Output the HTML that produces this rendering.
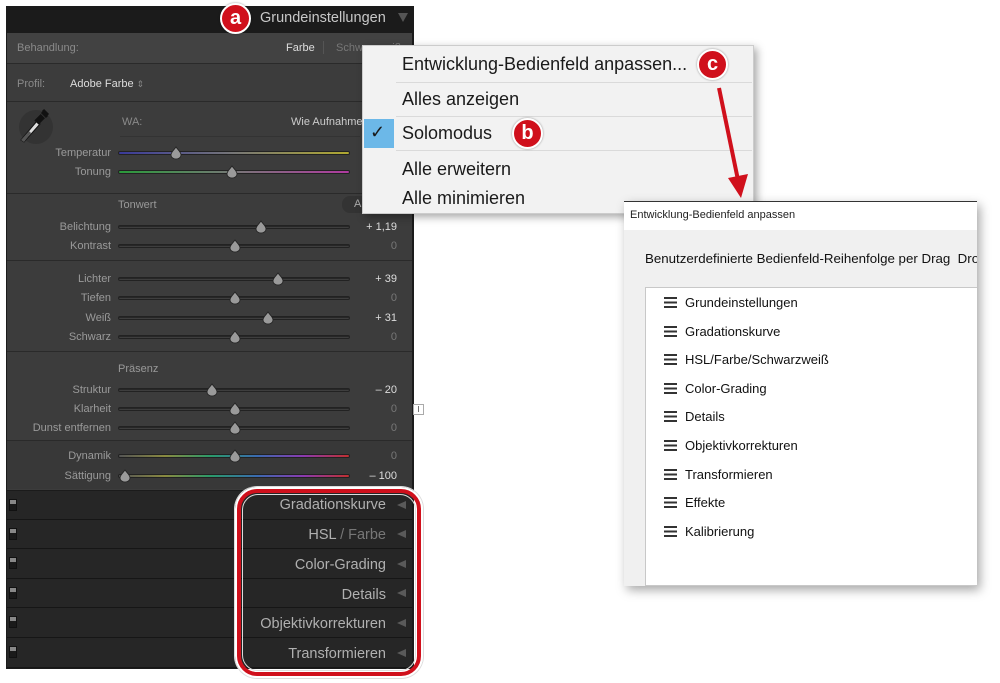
<!DOCTYPE html>
<html><head><meta charset="utf-8"><style>
*{margin:0;padding:0;box-sizing:border-box}
body{width:1000px;height:683px;background:#fff;position:relative;overflow:hidden;font-family:"Liberation Sans",sans-serif}
.a{position:absolute}
.lbl{position:absolute;right:889px;font-size:11px;color:#9a9a9a;white-space:nowrap}
.val{position:absolute;right:603px;font-size:11px;color:#777;white-space:nowrap}
.val.w{color:#ddd}
.trk{position:absolute;left:118px;width:232px;height:4px;border-radius:2px;background:linear-gradient(#1c1c1c,#4a4a4a);border:1px solid #222}
.sep{position:absolute;left:7px;width:405px;height:1px;background:#2a2a2a}
.row{position:absolute;left:7px;width:405px;height:29px;background:#262626;border-bottom:1px solid #161616}
.row .t{position:absolute;right:26px;top:6px;font-size:14.5px;color:#b0b0b0}
.row .sq{position:absolute;left:2px;top:8px;width:8px;height:12px;background:linear-gradient(#888 0 40%,#1a1a1a 40%);border:1px solid #111}
.row .tri{position:absolute;right:6px;top:10px;width:0;height:0;border-right:9px solid #5a5a5a;border-top:4px solid transparent;border-bottom:4px solid transparent}
.circ{position:absolute;width:31px;height:31px;border-radius:50%;background:#d0101c;border:2px solid #fff;color:#fff;font-weight:bold;font-size:20px;text-align:center;line-height:26px;box-shadow:0 0 2px rgba(0,0,0,.4)}
.mi{position:absolute;left:402px;font-size:18px;color:#1a1a1a;white-space:nowrap}
.ms{position:absolute;left:396px;width:356px;height:1px;background:#dadada}
.li{position:absolute;left:664px;font-size:13px;color:#111;white-space:nowrap}
.li b{display:inline-block;width:13px;height:11px;margin-right:8px;vertical-align:-1px;background:linear-gradient(#333 0 2px,transparent 2px 4.5px,#333 4.5px 6.5px,transparent 6.5px 9px,#333 9px 11px)}
</style></head><body>

<div class="a" style="left:6px;top:6px;width:408px;height:663px;background:#1b1b1b"></div>
<div class="a" style="left:7px;top:33px;width:405px;height:457px;background:#3c3c3c"></div>
<div class="a" style="left:7px;top:33px;width:405px;height:30px;background:#424242"></div>
<div class="a" style="left:7px;top:441px;width:405px;height:48px;background:#383838"></div>
<div class="a" style="left:260px;top:10px;font-size:14.5px;color:#c8c8c8">Grundeinstellungen</div>
<div class="a" style="left:398px;top:13px;width:0;height:0;border-top:9px solid #555;border-left:5px solid transparent;border-right:5px solid transparent"></div>

<div class="sep" style="top:63px"></div>
<div class="sep" style="top:101px"></div>
<div class="sep" style="top:193px"></div>
<div class="sep" style="top:260px"></div>
<div class="sep" style="top:351px"></div>
<div class="sep" style="top:440px"></div>
<div class="a" style="left:120px;top:136px;width:240px;height:1px;background:#333"></div>

<div class="a" style="left:17px;top:42px;font-size:11px;color:#8a8a8a">Behandlung:</div>
<div class="a" style="left:286px;top:42px;font-size:11px;color:#ddd">Farbe</div>
<div class="a" style="left:323px;top:41px;width:1px;height:13px;background:#555"></div>
<div class="a" style="left:336px;top:42px;font-size:11px;color:#777">Schwarzweiß</div>
<div class="a" style="left:17px;top:78px;font-size:11px;color:#8a8a8a">Profil:</div>
<div class="a" style="left:70px;top:78px;font-size:11px;color:#ddd">Adobe Farbe <span style="color:#888;font-size:9px">⇕</span></div>

<div class="a" style="left:19px;top:110px;width:34px;height:34px;border-radius:50%;background:#333"></div>
<svg class="a" style="left:17px;top:107px" width="36" height="36" viewBox="0 0 36 36"><path d="M4 33 L20 14 L23 17 L7 35 Z" fill="#ddd" stroke="#111" stroke-width="1"/><path d="M4 33 L12 24 L14 26 L7 35Z" fill="#555"/><rect x="20" y="8" width="6" height="9" transform="rotate(45 23 12)" fill="#111"/><path d="M26 3 L31 8 M25 5 L30 10" stroke="#111" stroke-width="3"/></svg>
<div class="a" style="left:122px;top:116px;font-size:11px;color:#8a8a8a">WA:</div>
<div class="a" style="left:291px;top:116px;font-size:11px;color:#ccc">Wie Aufnahme</div>
<div class="a" style="left:118px;top:199px;font-size:11px;color:#999">Tonwert</div>
<div class="a" style="left:342px;top:196px;width:30px;height:17px;border-radius:8px;background:#333;color:#aaa;font-size:11px;padding:2px 0 0 12px">A</div>
<div class="a" style="left:118px;top:363px;font-size:11px;color:#999">Präsenz</div>

<div class="lbl" style="top:147px">Temperatur</div><div class="trk" style="top:151px;background:linear-gradient(90deg,#3a3a9a,#777,#b0a830)"></div>
<div class="lbl" style="top:166px">Tonung</div><div class="trk" style="top:170px;background:linear-gradient(90deg,#2a9a3a,#777,#b03aa0)"></div>
<div class="lbl" style="top:221px">Belichtung</div><div class="trk" style="top:225px"></div><div class="val w" style="top:221px">+ 1,19</div>
<div class="lbl" style="top:240px">Kontrast</div><div class="trk" style="top:244px"></div><div class="val" style="top:240px">0</div>
<div class="lbl" style="top:273px">Lichter</div><div class="trk" style="top:277px"></div><div class="val w" style="top:273px">+ 39</div>
<div class="lbl" style="top:292px">Tiefen</div><div class="trk" style="top:296px"></div><div class="val" style="top:292px">0</div>
<div class="lbl" style="top:312px">Weiß</div><div class="trk" style="top:316px"></div><div class="val w" style="top:312px">+ 31</div>
<div class="lbl" style="top:331px">Schwarz</div><div class="trk" style="top:335px"></div><div class="val" style="top:331px">0</div>
<div class="lbl" style="top:384px">Struktur</div><div class="trk" style="top:388px"></div><div class="val w" style="top:384px">– 20</div>
<div class="lbl" style="top:403px">Klarheit</div><div class="trk" style="top:407px"></div><div class="val" style="top:403px">0</div>
<div class="lbl" style="top:422px">Dunst entfernen</div><div class="trk" style="top:426px"></div><div class="val" style="top:422px">0</div>
<div class="lbl" style="top:450px">Dynamik</div><div class="trk" style="top:454px;background:linear-gradient(90deg,#555,#8a8a40,#2a9a6a,#3a6ab0,#8a3ab0,#c03030)"></div><div class="val" style="top:450px">0</div>
<div class="lbl" style="top:470px">Sättigung</div><div class="trk" style="top:474px;background:linear-gradient(90deg,#555,#8a8a40,#2a9a6a,#3a6ab0,#8a3ab0,#c03030)"></div><div class="val w" style="top:470px">– 100</div>

<svg class="a" style="left:0;top:0" width="420" height="500">
<defs><path id="t" d="M0 -6 C2 -3 5 -1 5 2 A5 4 0 0 1 -5 2 C-5 -1 -2 -3 0 -6Z" fill="#9a9a9a" stroke="#222" stroke-width="0.8"/></defs>
<use href="#t" x="176" y="153"/><use href="#t" x="232" y="172"/>
<use href="#t" x="261" y="227"/><use href="#t" x="235" y="246"/>
<use href="#t" x="278" y="279"/><use href="#t" x="235" y="298"/>
<use href="#t" x="268" y="318"/><use href="#t" x="235" y="337"/>
<use href="#t" x="212" y="390"/><use href="#t" x="235" y="409"/>
<use href="#t" x="235" y="428"/><use href="#t" x="235" y="456"/>
<use href="#t" x="125" y="476"/>
</svg>
<div class="a" style="left:413px;top:404px;width:11px;height:11px;border:1px solid #aaa;font-size:8px;color:#444;text-align:center;line-height:9px">I</div>

<div class="row" style="top:491px"><div class="sq"></div><div class="t">Gradationskurve</div><div class="tri"></div></div>
<div class="row" style="top:520px"><div class="sq"></div><div class="t" style="top:7px">HSL <span style="color:#777">/ Farbe</span></div><div class="tri"></div></div>
<div class="row" style="top:549px;height:30px"><div class="sq"></div><div class="t" style="top:8px">Color-Grading</div><div class="tri" style="top:11px"></div></div>
<div class="row" style="top:579px"><div class="sq"></div><div class="t" style="top:8px">Details</div><div class="tri"></div></div>
<div class="row" style="top:608px;height:30px"><div class="sq"></div><div class="t" style="top:8px">Objektivkorrekturen</div><div class="tri" style="top:11px"></div></div>
<div class="row" style="top:638px;height:30px"><div class="sq"></div><div class="t" style="top:8px">Transformieren</div><div class="tri" style="top:11px"></div></div>

<div class="a" style="left:235px;top:487px;width:188px;height:191px;border:3px solid #fff;border-radius:22px;box-shadow:0 0 0 1px #ddd"></div>
<div class="a" style="left:237px;top:489px;width:184px;height:187px;border:4px solid #d0101c;border-radius:20px"></div>
<div class="a" style="left:242px;top:494px;width:174px;height:177px;border:1px solid #ddd;border-radius:16px"></div>

<div class="a" style="left:362px;top:45px;width:392px;height:169px;background:#f2f2f2;border:1px solid #ccc;box-shadow:3px 3px 8px rgba(0,0,0,.35)"></div>
<div class="mi" style="top:54px">Entwicklung-Bedienfeld anpassen...</div>
<div class="ms" style="top:82px"></div>
<div class="mi" style="top:89px">Alles anzeigen</div>
<div class="ms" style="top:116px"></div>
<div class="a" style="left:364px;top:119px;width:30px;height:29px;background:#6cb8e8"></div>
<div class="a" style="left:370px;top:122px;font-size:18px;color:#1a1a1a">✓</div>
<div class="mi" style="top:123px">Solomodus</div>
<div class="ms" style="top:150px"></div>
<div class="mi" style="top:159px">Alle erweitern</div>
<div class="mi" style="top:188px">Alle minimieren</div>

<div class="a" style="left:624px;top:201px;width:353px;height:385px;background:#f0f0f0;box-shadow:3px 4px 10px rgba(0,0,0,.35)"></div>
<div class="a" style="left:624px;top:201px;width:353px;height:29px;background:#fff;border-top:1px solid #333"></div>
<div class="a" style="left:630px;top:209px;font-size:11px;color:#222">Entwicklung-Bedienfeld anpassen</div>
<div class="a" style="left:645px;top:251px;font-size:13.3px;color:#111;white-space:nowrap;width:332px;overflow:hidden">Benutzerdefinierte Bedienfeld-Reihenfolge per Drag&nbsp; Drop</div>
<div class="a" style="left:645px;top:287px;width:332px;height:299px;background:#fff;border:1px solid #c8c8c8;border-right:none"></div>
<div class="li" style="top:295px"><b></b>Grundeinstellungen</div>
<div class="li" style="top:324px"><b></b>Gradationskurve</div>
<div class="li" style="top:352px"><b></b>HSL/Farbe/Schwarzweiß</div>
<div class="li" style="top:381px"><b></b>Color-Grading</div>
<div class="li" style="top:409px"><b></b>Details</div>
<div class="li" style="top:438px"><b></b>Objektivkorrekturen</div>
<div class="li" style="top:467px"><b></b>Transformieren</div>
<div class="li" style="top:495px"><b></b>Effekte</div>
<div class="li" style="top:524px"><b></b>Kalibrierung</div>

<svg class="a" style="left:700px;top:80px" width="60" height="125"><line x1="19" y1="8" x2="38" y2="100" stroke="#d0101c" stroke-width="4"/><path d="M28 98 L48 94 L41 118 Z" fill="#d0101c"/></svg>

<div class="circ" style="left:220px;top:3px">a</div>
<div class="circ" style="left:512px;top:118px">b</div>
<div class="circ" style="left:697px;top:49px">c</div>
</body></html>
